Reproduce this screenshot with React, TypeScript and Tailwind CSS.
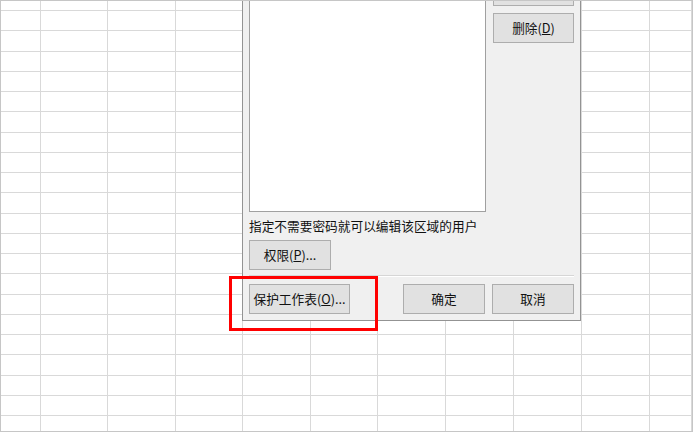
import React from 'react';

const colWidths = [40, 67, 68, 67, 68, 67, 68, 68, 68, 68];
const rowCount = 22;

const Btn = ({ className = '', children }: { className?: string; children?: React.ReactNode }) => (
  <div
    className={`h-[30px] flex items-center justify-center bg-[#e1e1e1] border border-[#adadad] text-[12.7px] text-[#111] leading-none ${className}`}
  >
    {children}
  </div>
);

const Sheet = () => (
  <div className="grid grid-cols-[40px_67px_68px_67px_68px_67px_68px_68px_68px_68px_1fr] grid-rows-[10px_repeat(21,20.25px)]">
    {Array.from({ length: rowCount }).map((_, r) =>
      Array.from({ length: colWidths.length + 1 }).map((_, c) => (
        <div key={`${r}-${c}`} className="border-r border-b border-[#d9d9d9]" />
      ))
    )}
  </div>
);

export default function App() {
  return (
    <div
      className="relative w-[693px] h-[432px] overflow-hidden bg-white border border-[#c6c6c6]"
      style={{ fontFamily: '"Noto Sans CJK SC", "Noto Sans", sans-serif' }}
    >
      <Sheet />

      {/* dialog, top part scrolled out of view */}
      <div className="absolute left-[241px] top-[-72px] w-[339px] bg-[#f0f0f0] border border-[#939393] px-[6px] pt-[9px] pb-[6px] flex flex-col">
        <div className="flex gap-[7px]">
          <div className="w-[237px] h-[273px] bg-white border border-[#a0a0a0]" />
          <div className="w-[81px] flex flex-col gap-[7px]">
            {/* upper buttons are off-screen */}
            <Btn />
            <Btn />
            <Btn>
              删除(<span className="underline">D</span>)
            </Btn>
          </div>
        </div>
        <div className="mt-[6px] h-[16px] leading-[16px] text-[12.7px] text-[#111]">
          指定不需要密码就可以编辑该区域的用户
        </div>
        <Btn className="mt-[6px] w-[82px]">
          权限(<span className="underline">P</span>)...
        </Btn>
        <div className="mt-[5px] border-t border-[#d6d6d6] border-b border-b-white" />
        <div className="mt-[7px] flex">
          <Btn className="w-[101px]">
            保护工作表(<span className="underline">O</span>)...
          </Btn>
          <div className="flex-1" />
          <Btn className="w-[82px]">确定</Btn>
          <Btn className="w-[82px] ml-[7px]">取消</Btn>
        </div>
      </div>

      {/* highlight */}
      <div className="absolute left-[228px] top-[275px] w-[149px] h-[55px] border-[3px] border-[#ff0000]" />
    </div>
  );
}
